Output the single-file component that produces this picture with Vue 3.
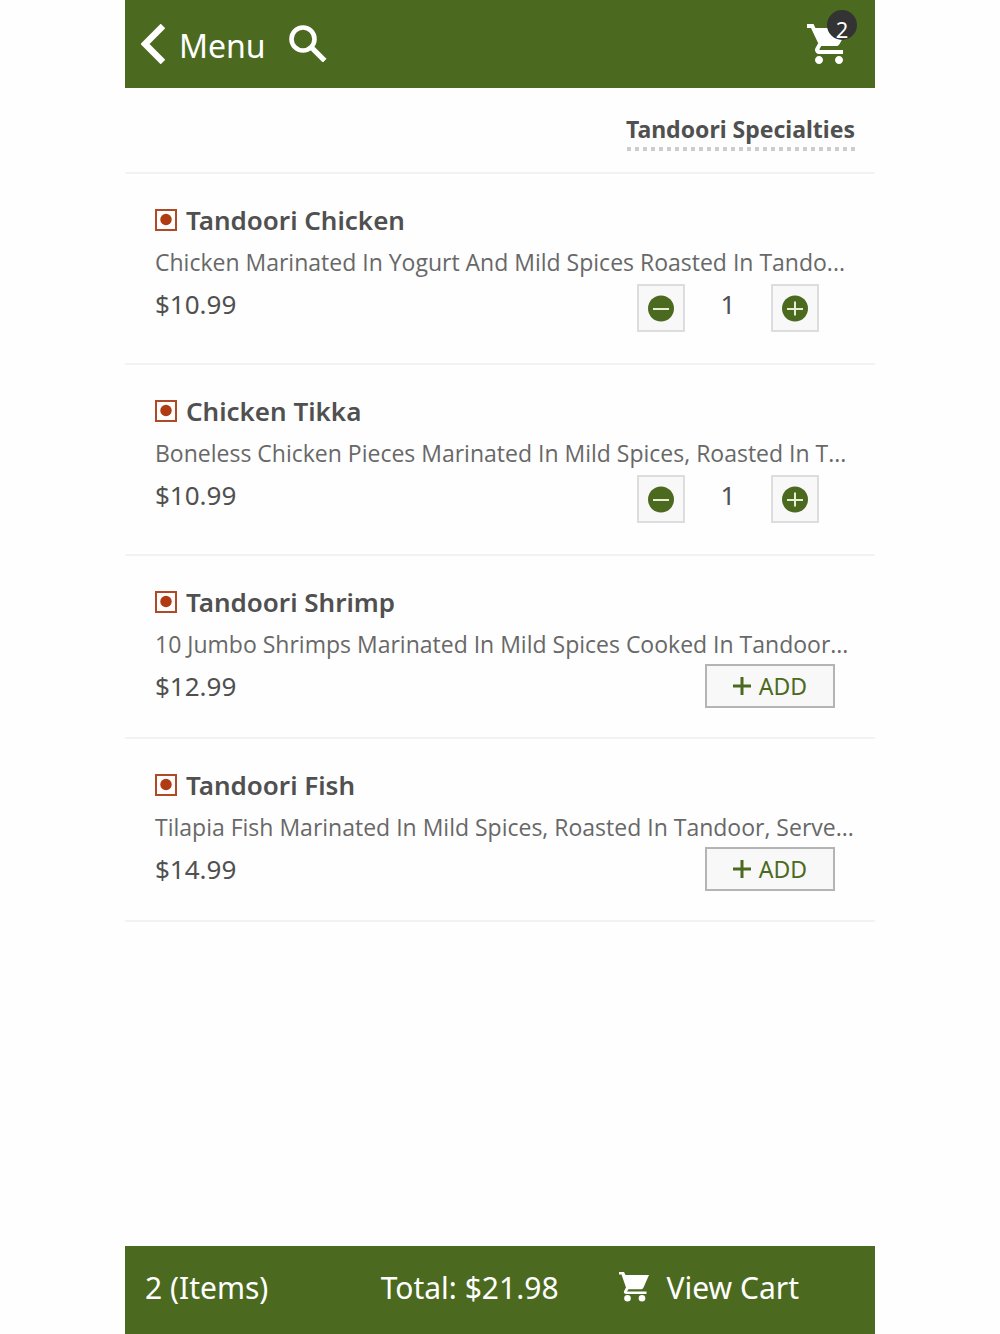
<script setup>
import { computed, ref } from 'vue'

const items = ref([
  { name: 'Tandoori Chicken', description: 'Chicken Marinated In Yogurt And Mild Spices Roasted In Tando...', price: 10.99, quantity: 1 },
  { name: 'Chicken Tikka', description: 'Boneless Chicken Pieces Marinated In Mild Spices, Roasted In T...', price: 10.99, quantity: 1 },
  { name: 'Tandoori Shrimp', description: '10 Jumbo Shrimps Marinated In Mild Spices Cooked In Tandoor...', price: 12.99, quantity: 0 },
  { name: 'Tandoori Fish', description: 'Tilapia Fish Marinated In Mild Spices, Roasted In Tandoor, Serve...', price: 14.99, quantity: 0 },
])

const count = computed(() => items.value.reduce((sum, item) => sum + item.quantity, 0))
const total = computed(() => items.value.reduce((sum, item) => sum + item.quantity * item.price, 0))
</script>

<template>
  <div class="app">
    <header class="topbar">
      <a class="back" href="#menu">
        <svg width="24" height="40" viewBox="0 0 24 40" aria-hidden="true">
          <path d="M22 2 4 20l18 18" fill="none" stroke="currentColor" stroke-width="6.5" />
        </svg>
        <span>Menu</span>
      </a>
      <button class="search" type="button" aria-label="Search">
        <svg width="38" height="38" viewBox="0 0 38 38" aria-hidden="true">
          <circle cx="14" cy="14" r="11.5" fill="none" stroke="currentColor" stroke-width="4.6" />
          <path d="m22 22 3-.2L37 33.8l-3.200 3.200L22 25.200z" fill="currentColor" stroke="currentColor" stroke-width="1" />
        </svg>
      </button>
      <a class="cart" href="#cart" aria-label="Cart">
        <svg width="40" height="40" viewBox="1 2 20 20" aria-hidden="true">
          <path fill="currentColor" d="M7 18c-1.100 0-1.990.9-1.990 2S5.900 22 7 22s2-.9 2-2-.9-2-2-2zM1 2v2h2l3.600 7.590-1.350 2.450c-.16.28-.25.61-.25.96 0 1.100.9 2 2 2h12v-2H7.420c-.14 0-.25-.11-.25-.25l.03-.12.9-1.630h7.450c.75 0 1.410-.41 1.750-1.030l3.580-6.490c.08-.14.12-.31.12-.48 0-.55-.45-1-1-1H5.210l-.94-2H1zm16 16c-1.100 0-1.990.9-1.990 2s.89 2 1.990 2 2-.9 2-2-.9-2-2-2z" />
        </svg>
        <span class="badge">{{ count }}</span>
      </a>
    </header>

    <main>
      <div class="category">
        <h1>Tandoori Specialties</h1>
      </div>
      <ul class="items">
        <li v-for="item in items" :key="item.name" class="item">
          <h2>
            <svg width="22" height="22" viewBox="0 0 22 22" aria-hidden="true">
              <rect x="1" y="1" width="20" height="20" fill="none" stroke="#b04a26" stroke-width="2" />
              <circle cx="11" cy="10.5" r="5.7" fill="#b03a12" />
            </svg>
            {{ item.name }}
          </h2>
          <p class="description">{{ item.description }}</p>
          <div class="purchase">
            <span class="price">${{ item.price.toFixed(2) }}</span>
            <div v-if="item.quantity" class="quantity">
              <button class="step" type="button" :aria-label="`Remove one ${item.name}`" @click="item.quantity--">
                <svg width="28" height="28" viewBox="0 0 28 28" aria-hidden="true">
                  <circle cx="14" cy="14.5" r="13" fill="#4b6a20" />
                  <path d="M6 15h16" stroke="#e6eed6" stroke-width="2" />
                </svg>
              </button>
              <output>{{ item.quantity }}</output>
              <button class="step" type="button" :aria-label="`Add one ${item.name}`" @click="item.quantity++">
                <svg width="28" height="28" viewBox="0 0 28 28" aria-hidden="true">
                  <circle cx="14" cy="14.5" r="13" fill="#4b6a20" />
                  <path d="M6 15h16M14 7.5v14" stroke="#e6eed6" stroke-width="2" />
                </svg>
              </button>
            </div>
            <button v-else class="add" type="button" @click="item.quantity++">
              <svg width="18" height="18" viewBox="0 0 18 18" aria-hidden="true">
                <path d="M0 9h18M9 0v18" stroke="currentColor" stroke-width="3" />
              </svg>
              ADD
            </button>
          </div>
        </li>
      </ul>
    </main>

    <footer class="summary">
      <span class="count">{{ count }} (Items)</span>
      <span class="total">Total: ${{ total.toFixed(2) }}</span>
      <a class="view" href="#cart">
        <svg width="30" height="30" viewBox="0 0 30 30" fill="currentColor" aria-hidden="true">
          <path d="M0 0h5l1.500 3H30l-5.500 12.500Q23.800 17.200 22.500 17.200H9.500L8 19.500h19.500V22H7Q4 21.500 5.200 18.800L7 15.500 2.500 2.500H0z" />
          <circle cx="8.5" cy="26.3" r="3.3" />
          <circle cx="23" cy="26.3" r="3.3" />
        </svg>
        View Cart
      </a>
    </footer>
  </div>
</template>

<style>
body {
  margin: 0;
  background: #fefefe;
}
</style>

<style scoped>
* {
  box-sizing: border-box;
}

.app {
  display: flex;
  flex-direction: column;
  max-width: 750px;
  min-height: 100vh;
  margin: 0 auto;
  color: #505050;
  font-family: "Noto Sans", sans-serif;
}

main {
  flex: 1;
}

svg {
  display: block;
  flex: none;
}

a {
  color: inherit;
  text-decoration: none;
}

button {
  padding: 0;
  font: inherit;
  cursor: pointer;
}

.topbar {
  display: flex;
  align-items: center;
  height: 88px;
  padding: 0 28px 0 16px;
  background: #4b6a20;
  color: #fff;
}

.back {
  display: flex;
  align-items: center;
  gap: 14px;
  font-size: 32px;
  line-height: 44px;
}

.back span {
  padding-top: 4px;
}

.search {
  margin-left: 23px;
  border: 0;
  background: none;
  color: inherit;
}

.cart {
  position: relative;
  margin-left: auto;
}

.badge {
  position: absolute;
  top: -14px;
  right: -10px;
  width: 30px;
  height: 30px;
  border-radius: 50%;
  background: #333;
  font-size: 22px;
  line-height: 38px;
  text-align: center;
}

.category {
  display: flex;
  justify-content: flex-end;
  padding: 25px 20px 21px;
  border-bottom: 2px solid #f2f2f2;
}

h1 {
  margin: 0;
  padding-bottom: 6px;
  background: repeating-linear-gradient(to left, #ccc 0 4px, transparent 4px 8px) left bottom / 100% 4px no-repeat;
  font-size: 23px;
  font-weight: 700;
  line-height: 32px;
}

.items {
  margin: 0;
  padding: 0;
  list-style: none;
}

.item {
  padding: 26px 30px 29px;
  border-bottom: 2px solid #f2f2f2;
}

h2 {
  display: flex;
  align-items: center;
  gap: 9px;
  margin: 0;
  font-size: 26px;
  font-weight: 600;
  line-height: 40px;
}

.description {
  margin: 2px 0 0;
  color: #686868;
  font-family: "Open Sans", "Noto Sans", sans-serif;
  font-size: 23px;
  line-height: 40px;
  white-space: nowrap;
}

.purchase {
  display: flex;
  align-items: flex-start;
  justify-content: space-between;
  padding-right: 10px;
}

.price {
  font-size: 26px;
  line-height: 44px;
}

.quantity {
  display: flex;
  padding: 2px 0;
  margin-right: 16px;
}

.quantity output {
  width: 86px;
  font-size: 26px;
  line-height: 40px;
  text-align: center;
}

.step {
  display: grid;
  place-items: center;
  width: 48px;
  height: 48px;
  border: 2px solid #ddd;
  background: #f8f8f8;
}

.add {
  display: flex;
  align-items: center;
  justify-content: center;
  gap: 8px;
  width: 130px;
  height: 44px;
  border: 2px solid #b4b4b4;
  background: #f8f8f8;
  color: #4b6a20;
  font-size: 23px;
}

.summary {
  display: flex;
  align-items: center;
  height: 88px;
  padding: 0 76px 6px 20px;
  background: #4b6a20;
  color: #fff;
  font-size: 30px;
}

.total {
  margin: 0 60px 0 auto;
}

.view {
  display: flex;
  align-items: center;
  gap: 18px;
}
</style>
